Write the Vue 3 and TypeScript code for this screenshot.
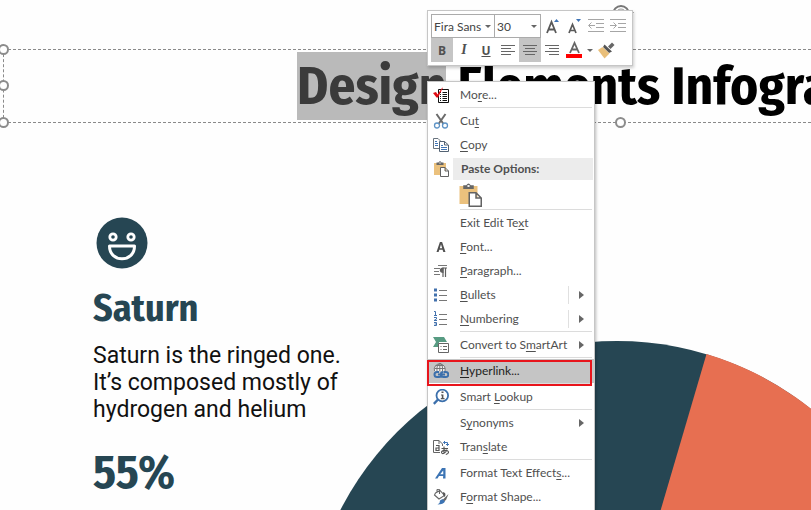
<script setup lang="ts">
import { ref } from 'vue'

interface Shape {
  d: string
  fill?: string
  stroke?: string
  w?: number
}

interface MenuEntry {
  kind: 'item' | 'separator' | 'heading' | 'paste'
  label?: [string, string, string]
  icon?: string
  submenu?: boolean
  split?: boolean
  active?: boolean
}

const gray = '#5f5f5f'
const blue = '#3f74b5'

const icons: Record<string, Shape[]> = {
  more: [
    { d: 'M5.5 2.500H15.500V15.500H5.500Z', fill: '#fff', stroke: '#111', w: 1 },
    { d: 'M7 5.500H8M9.500 5.500H14M7 7.500H8M9.500 7.500H14M7 9.500H8M9.500 9.500H14M7 11.500H8M9.500 11.500H14M7 13.500H8M9.500 13.500H14', stroke: '#111', w: 1 },
    { d: 'M0 6L3 5L4.500 7.500L9 1L10 0.500L5 10.500H3.500Z', fill: '#e00b12' },
  ],
  cut: [
    { d: 'M3.500 1L10.500 11M12.500 1L5.500 11', stroke: '#6b6b6b', w: 2 },
    { d: 'M1.500 12.500a2.500 2.500 0 1 0 5 0a2.500 2.500 0 1 0 -5 0M9.500 12.500a2.500 2.500 0 1 0 5 0a2.500 2.500 0 1 0 -5 0', stroke: '#5f94c6', w: 1.3 },
  ],
  copy: [
    { d: 'M0.500 1.500H5L7.500 4V11.500H0.500Z', fill: '#fff', stroke: '#69737e', w: 1 },
    { d: 'M2 4.500H4M2 6.500H5M2 8.500H5', stroke: blue, w: 1 },
    { d: 'M6.500 4.500H11.500L15.500 8V14.500H6.500ZM11.500 4.500V8H15', fill: '#fff', stroke: '#536273', w: 1 },
    { d: 'M8 8.500H10M8 10.500H14M8 12.500H14', stroke: blue, w: 1 },
  ],
  clipboard: [
    { d: 'M1 2H13V14H1Z', fill: '#ebc17d' },
    { d: 'M3.500 1.500H5.500Q7 -1 8.500 1.500H10.500V4H3.500Z', fill: '#666' },
    { d: 'M6.300 1.400H7.700V2.600H6.300Z', fill: '#fff' },
    { d: 'M7.500 6.500H12L15.500 10V15.500H7.500ZM12 6.500V10H15.500', fill: '#fff', stroke: '#636363', w: 1 },
  ],
  font: [{ d: 'M6.900 3H9.100L12.500 13H10.300L9.600 10.800H6.300L5.600 13H3.500ZM8 5.200L6.800 9.200H9.200Z', fill: '#505050' }],
  paragraph: [
    { d: 'M5 2.500H14M1 5.500H7M1 8.500H6M1 11.500H7', stroke: '#777', w: 1 },
    { d: 'M10 14V5H14M12.500 14V5', stroke: gray, w: 1.200 },
    { d: 'M10.500 4.500V10C5.500 10 5.500 4.500 10.500 4.500Z', fill: gray },
  ],
  bullets: [
    { d: 'M1 1.500H4V4.500H1ZM1 6.500H4V9.500H1ZM1 11.500H4V14.500H1Z', fill: '#4271ad' },
    { d: 'M6 3.500H14M6 8.500H14M6 13.500H14', stroke: '#777', w: 1 },
  ],
  numbering: [
    { d: 'M1 0.500H2.500V4.500M1 4.500H4M1 6.500H3.500V8L1 9.500H4M1 11.500H3.500V14.500H1M1.500 13H3.500', stroke: '#4271ad', w: 1 },
    { d: 'M6 3.500H14M6 8.500H14M6 13.500H14', stroke: '#777', w: 1 },
  ],
  smartart: [
    { d: 'M0 0H11L14 5H6V10H0L3 5Z', fill: '#579b82' },
    { d: 'M5.500 6.500H15.500V15.500H5.500Z', fill: '#fff', stroke: '#666', w: 1 },
    { d: 'M7.500 9.500H8.500M10 9.500H14M7.500 12.500H8.500M10 12.500H14', stroke: '#666', w: 1 },
  ],
  link: [
    { d: 'M1.500 8A5.500 5.500 0 1 1 12 8M1.500 5.500H12M2.500 2.500H11M6.800 0V8M4 8C3.500 4 4.500 1 6.800 0C9 1 10 4 9.500 8', fill: '#f2f2f2', stroke: '#777', w: 1 },
    { d: 'M6 9H4Q1.500 9 1.500 11.500T4 14H6Q8 14 8 12.500M11 9H13Q15.300 9 15.300 11.500T13 14H10.500Q8.500 14 8.500 12.500M5 11.500H12M8 10.500Q8 9 10.500 9', stroke: '#3c70ac', w: 2 },
  ],
  lookup: [
    { d: 'M3.500 6.500a5.800 5.800 0 1 0 11.600 0a5.800 5.800 0 1 0 -11.600 0', fill: '#fff', stroke: '#3c70ac', w: 1.800 },
    { d: 'M5 10.500L0.800 14.800', stroke: '#3c70ac', w: 2.400 },
    { d: 'M8.500 2.500H10.500V4H8.500ZM8 5.500H10.400V9H11.500V10.200H7.800V9H8.800V6.500H8Z', fill: '#555' },
  ],
  translate: [
    { d: 'M7 13.500H0.500V1.500H6L9.500 5V7M6 1.500V5', stroke: '#666', w: 1 },
    { d: 'M3 6.500H6V11.500H3V9H6', stroke: '#555', w: 1.200 },
    { d: 'M10.500 3.500H14.500V6.500M13 5L14.500 6.500L16 5M12 2L10.500 3.500L12 5', stroke: blue, w: 1 },
    { d: 'M8.500 9.500H15M11 7.500V14.500M14 10.500C13 14 9 16 8.500 13.500C8.500 11 15.500 10.500 15.500 13.300Q15.500 15 12.800 15.500', stroke: '#555', w: 1.100 },
  ],
  effects: [{ d: 'M9 3H12.500V13.500H10L10.200 11H6L4.500 13.500H2ZM10.200 5.500L7.200 9.300H10.300Z', fill: '#3c74b4' }],
  shape: [
    { d: 'M2.500 4L7 1.500L11.500 6.500L6 10L1.500 6ZM4 4V1Q5.500 -0.500 6.500 1V5', fill: '#fff', stroke: '#666', w: 1.100 },
    { d: 'M10 3Q14 4 11.500 8Q10 7 10 3Z', fill: '#555' },
    { d: 'M15.500 5L13 11L10 13L9 11.500L12 8.500Z', fill: '#666' },
    { d: 'M9.500 10L12 12.500Q10.500 15.500 4.500 15.500Q7.500 13.500 7 11.500Z', fill: '#3c74b4' },
  ],
}

const entries: MenuEntry[] = [
  { kind: 'item', label: ['Mo', 'r', 'e...'], icon: 'more' },
  { kind: 'separator' },
  { kind: 'item', label: ['Cu', 't', ''], icon: 'cut' },
  { kind: 'item', label: ['', 'C', 'opy'], icon: 'copy' },
  { kind: 'heading', label: ['Paste Options:', '', ''], icon: 'clipboard' },
  { kind: 'paste', icon: 'clipboard' },
  { kind: 'separator' },
  { kind: 'item', label: ['Exit Edit Te', 'x', 't'] },
  { kind: 'item', label: ['', 'F', 'ont...'], icon: 'font' },
  { kind: 'item', label: ['', 'P', 'aragraph...'], icon: 'paragraph' },
  { kind: 'item', label: ['', 'B', 'ullets'], icon: 'bullets', submenu: true, split: true },
  { kind: 'item', label: ['', 'N', 'umbering'], icon: 'numbering', submenu: true, split: true },
  { kind: 'separator' },
  { kind: 'item', label: ['Convert to S', 'm', 'artArt'], icon: 'smartart', submenu: true },
  { kind: 'separator' },
  { kind: 'item', label: ['', 'H', 'yperlink...'], icon: 'link', active: true },
  { kind: 'separator' },
  { kind: 'item', label: ['Smart ', 'L', 'ookup'], icon: 'lookup' },
  { kind: 'separator' },
  { kind: 'item', label: ['S', 'y', 'nonyms'], submenu: true },
  { kind: 'item', label: ['Tran', 's', 'late'], icon: 'translate' },
  { kind: 'separator' },
  { kind: 'item', label: ['Format Text Effect', 's', '...'], icon: 'effects' },
  { kind: 'item', label: ['F', 'o', 'rmat Shape...'], icon: 'shape' },
]

const family = ref('Fira Sans')
const size = ref('30')
const bold = ref(true)
</script>

<template>
  <main class="slide">
    <header class="title-box">
      <h1><span class="selected">Design</span> Elements Infographics</h1>
      <i class="handle top-left"></i>
      <i class="handle mid-left"></i>
      <i class="handle bottom-left"></i>
      <i class="handle bottom-mid"></i>
    </header>

    <section class="planet">
      <svg class="face" viewBox="0 0 52 52" aria-hidden="true">
        <circle cx="26" cy="26" r="25.500" fill="#264653" />
        <g fill="none" stroke="#fff">
          <circle cx="17" cy="20" r="3.200" stroke-width="2.800" />
          <circle cx="35" cy="20" r="3.200" stroke-width="2.800" />
          <path d="M13.500 29H38.500C38.500 46 13.500 46 13.500 29Z" stroke-width="3" stroke-linejoin="round" />
        </g>
      </svg>
      <h2>Saturn</h2>
      <p>Saturn is the ringed one. It’s composed mostly of hydrogen and helium</p>
      <strong>55%</strong>
    </section>

    <svg class="pie" viewBox="0 0 622 622" aria-hidden="true">
      <circle cx="311" cy="311" r="311" fill="#264653" />
      <path d="M313 311L400.500 13A311 311 0 0 1 622 311Z" fill="#e76f51" />
    </svg>

    <svg class="rotate" viewBox="0 0 24 20" aria-hidden="true">
      <circle cx="11" cy="11" r="8" fill="none" stroke="#777" stroke-width="2" />
      <circle cx="11" cy="11" r="5" fill="none" stroke="#999" stroke-width="1" />
      <path d="M17 9H24L20.500 13Z" fill="#777" />
    </svg>

    <div class="mini-toolbar" role="toolbar" aria-label="Text formatting">
      <div class="tool-row">
        <label class="combo family">
          <select v-model="family" aria-label="Font"><option>Fira Sans</option></select>
          <i class="caret"></i>
        </label>
        <label class="combo size">
          <select v-model="size" aria-label="Font size"><option>30</option></select>
          <i class="caret"></i>
        </label>
        <button class="tool" aria-label="Increase font size">
          <svg viewBox="0 0 22 24"><path d="M6 19L10.500 8L15 19M7.500 15.500H13.500" fill="none" stroke="#5a5a5a" stroke-width="1.800" /><path d="M13 8L15.500 5L18 8Z" fill="#3f74b5" /></svg>
        </button>
        <button class="tool" aria-label="Decrease font size">
          <svg viewBox="0 0 22 24"><path d="M6 19L9.500 10.500L13 19M7 16.500H12" fill="none" stroke="#5a5a5a" stroke-width="1.700" /><path d="M13 5H18L15.500 8Z" fill="#3f74b5" /></svg>
        </button>
        <button class="tool" aria-label="Decrease indent">
          <svg viewBox="0 0 22 24"><path d="M3 5.500H19M11 9.500H19M11 13.500H19M3 17.500H19M10 11.500H4M6.500 8.500L3.500 11.500L6.500 14.500" fill="none" stroke="#a6a6a6" /></svg>
        </button>
        <button class="tool" aria-label="Increase indent">
          <svg viewBox="0 0 22 24"><path d="M3 5.500H19M11 9.500H19M11 13.500H19M3 17.500H19M3 11.500H9M6.500 8.500L9.500 11.500L6.500 14.500" fill="none" stroke="#a6a6a6" /></svg>
        </button>
      </div>
      <div class="tool-row">
        <button class="tool letter bold" :class="{ on: bold }" @click="bold = !bold">B</button>
        <button class="tool letter italic">I</button>
        <button class="tool letter underline">U</button>
        <button class="tool" aria-label="Align left">
          <svg viewBox="0 0 22 24"><path d="M4 7.500H18M4 10.500H14M4 13.500H18M4 16.500H14" stroke="#666" /></svg>
        </button>
        <button class="tool on" aria-label="Center">
          <svg viewBox="0 0 22 24"><path d="M4 7.500H18M6 10.500H16M4 13.500H18M6 16.500H16" stroke="#666" /></svg>
        </button>
        <button class="tool" aria-label="Align right">
          <svg viewBox="0 0 22 24"><path d="M4 7.500H18M8 10.500H18M4 13.500H18M8 16.500H18" stroke="#666" /></svg>
        </button>
        <button class="tool" aria-label="Font color">
          <svg viewBox="0 0 22 24"><path d="M7 15L11.500 5L16 15M8.500 11.500H14.500" fill="none" stroke="#666" stroke-width="1.800" /><path d="M3 16H19V20H3Z" fill="#f00" /></svg>
        </button>
        <button class="more-colors" aria-label="More colors"><i class="caret"></i></button>
        <button class="tool" aria-label="Format painter">
          <svg viewBox="0 0 22 24"><path d="M13 8.500L17 4.500L19.500 7L15.500 11Z" fill="#666" /><path d="M9.500 6.500L17 13.500L14 15L8 9Z" fill="#555" /><path d="M7.500 9L14.500 15.500L9.500 20.500L3 12Z" fill="#e9bf7a" /></svg>
        </button>
      </div>
    </div>

    <div class="menu" role="menu">
      <template v-for="(entry, index) in entries" :key="index">
        <hr v-if="entry.kind === 'separator'" />
        <button v-else-if="entry.kind === 'paste'" class="paste" role="menuitem" aria-label="Paste">
          <svg viewBox="0 0 16 16">
            <path v-for="shape in icons.clipboard" :key="shape.d" :d="shape.d" :fill="shape.fill ?? 'none'" :stroke="shape.stroke ?? 'none'" :stroke-width="shape.w ?? 0" />
          </svg>
        </button>
        <component
          :is="entry.kind === 'heading' ? 'div' : 'button'"
          v-else
          class="row"
          :class="{ heading: entry.kind === 'heading', active: entry.active }"
          :role="entry.kind === 'heading' ? undefined : 'menuitem'"
        >
          <span class="icon">
            <svg v-if="entry.icon" viewBox="0 0 16 16">
              <path v-for="shape in icons[entry.icon]" :key="shape.d" :d="shape.d" :fill="shape.fill ?? 'none'" :stroke="shape.stroke ?? 'none'" :stroke-width="shape.w ?? 0" />
            </svg>
          </span>
          <span v-if="entry.label" class="label">{{ entry.label[0] }}<u v-if="entry.label[1]">{{ entry.label[1] }}</u>{{ entry.label[2] }}</span>
          <span v-if="entry.submenu" class="arrow" :class="{ split: entry.split }"></span>
        </component>
      </template>
    </div>
  </main>
</template>

<style>
body {
  margin: 0;
  background: #fefefe;
}
</style>

<style scoped>
* {
  box-sizing: border-box;
}

.slide {
  position: relative;
  height: 100vh;
  overflow: hidden;
  padding-top: 49px;
  background: #fefefe;
  font-family: 'Open Sans', 'Noto Sans', sans-serif;
}

h1,
h2,
p {
  margin: 0;
}

h1,
h2,
strong {
  font-family: 'Fira Sans Condensed', 'Liberation Sans Narrow', Roboto, sans-serif;
  font-weight: 700;
}

.title-box {
  position: relative;
  margin-left: 3px;
  padding: 2px 0 2px 293px;
  border: 1px dashed #8a8a8a;
  border-right: 0;
}

h1 {
  font-size: 53px;
  line-height: 68px;
  white-space: nowrap;
  color: #000;
}

.selected {
  display: inline-block;
  background: #bababa;
  color: #3b3b3b;
}

.handle {
  position: absolute;
  width: 11px;
  height: 11px;
  border: 2px solid #8c8c8c;
  border-radius: 50%;
  background: #fff;
}

.top-left,
.mid-left,
.bottom-left {
  left: -6px;
}

.top-left {
  top: -6px;
}

.mid-left {
  top: 30px;
}

.bottom-left,
.bottom-mid {
  bottom: -6px;
}

.bottom-mid {
  left: 611px;
}

.planet {
  display: flex;
  flex-direction: column;
  align-items: flex-start;
  width: 360px;
  padding: 94px 0 0 93px;
  color: #264653;
}

.face {
  width: 52px;
  height: 52px;
  margin-left: 3px;
}

h2 {
  margin-top: 15px;
  font-size: 38px;
  line-height: 48px;
}

p {
  margin-top: 10px;
  font: 23px/27px Roboto, sans-serif;
  color: #111;
}

strong {
  margin-top: 23px;
  font-size: 47px;
  line-height: 52px;
}

.pie {
  position: absolute;
  top: 341px;
  left: 306px;
  width: 622px;
  height: 622px;
}

.rotate {
  position: absolute;
  top: 3px;
  left: 610px;
  width: 24px;
  height: 20px;
}

button {
  display: flex;
  align-items: center;
  padding: 0;
  border: 0;
  background: none;
  color: inherit;
  font: inherit;
  text-align: left;
}

.mini-toolbar {
  position: absolute;
  top: 10px;
  left: 427px;
  padding: 3px;
  border: 1px solid #c6c6c6;
  background: #fff;
  box-shadow: 1px 2px 3px #0003;
  color: #505050;
}

.tool-row {
  display: flex;
  height: 24px;
}

.combo {
  position: relative;
  display: flex;
  align-items: center;
  border: 1px solid #ababab;
}

.family {
  width: 64px;
}

.size {
  width: 46px;
  border-left: 0;
}

.combo select {
  width: 100%;
  height: 100%;
  padding: 0 0 0 2px;
  border: 0;
  appearance: none;
  background: none;
  color: #444;
  font: 12px Lato, 'Open Sans', sans-serif;
}

.caret {
  border: 3px solid transparent;
  border-top-color: #666;
  border-bottom: 0;
}

.combo .caret {
  position: absolute;
  right: 3px;
  pointer-events: none;
}

.tool {
  justify-content: center;
  width: 22px;
  height: 24px;
}

.tool svg {
  width: 22px;
  height: 24px;
}

.on {
  background: #c5c5c5;
}

.letter {
  font-size: 12px;
  font-weight: 700;
}

.italic {
  font-family: 'Liberation Serif', serif;
  font-size: 14px;
  font-style: italic;
}

.underline {
  text-decoration: underline;
}

.more-colors {
  justify-content: center;
  width: 10px;
}

.menu {
  position: absolute;
  top: 81px;
  left: 427px;
  width: 168px;
  padding: 1px 0 12px;
  border: 1px solid #c6c6c6;
  background: #fff;
  box-shadow: 1px 1px 3px #0004;
  color: #505050;
  font-family: Lato, 'Open Sans', sans-serif;
  font-size: 12px;
  line-height: 24px;
}

.row {
  position: relative;
  display: flex;
  align-items: center;
  width: 100%;
  height: 24px;
}

.icon {
  display: flex;
  flex: none;
  width: 32px;
  padding-left: 5px;
}

.icon svg {
  width: 16px;
  height: 16px;
}

.label {
  flex: 1;
  white-space: nowrap;
}

u {
  text-underline-offset: 2px;
}

.heading {
  font-weight: 700;
}

.heading .icon {
  width: 25px;
}

.heading .label {
  height: 22px;
  margin-right: 1px;
  padding-left: 8px;
  background: #ececec;
  line-height: 22px;
}

.active {
  background: #c5c5c5;
  color: #222;
}

.active::after {
  content: '';
  position: absolute;
  inset: 1px 2px -3px -1px;
  border: 2px solid #e8151c;
}

.arrow {
  display: flex;
  align-items: center;
  justify-content: flex-end;
  width: 20px;
  height: 18px;
  margin-right: 10px;
}

.arrow::after {
  content: '';
  border: 4px solid transparent;
  border-left: 5px solid #666;
  border-right: 0;
}

.split {
  width: 16px;
  border-left: 1px solid #e0e0e0;
}

.paste {
  height: 28px;
  padding-left: 30px;
}

.paste svg {
  width: 24px;
  height: 24px;
}

hr {
  height: 1px;
  margin: 0 2px 1px 32px;
  border: 0;
  background: #dcdcdc;
}
</style>
